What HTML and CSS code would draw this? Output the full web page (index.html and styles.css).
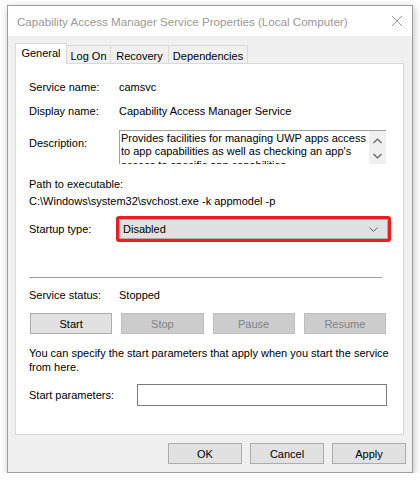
FILE: index.html
```html
<!DOCTYPE html>
<html>
<head>
<meta charset="utf-8">
<link rel="stylesheet" href="styles.css">
</head>
<body>
<div class="window">
  <div class="titlebar">
    <span class="title">Capability Access Manager Service Properties (Local Computer)</span>
    <svg class="close" width="12" height="12" viewBox="0 0 12 12"><path d="M1 1L11 11M11 1L1 11" stroke="#9a9a9a" stroke-width="1" fill="none"/></svg>
  </div>
  <div class="client">
    <div class="tabs">
      <div class="tab active t-general">General</div>
      <div class="tab t-logon">Log On</div>
      <div class="tab t-recovery">Recovery</div>
      <div class="tab t-deps">Dependencies</div>
    </div>
    <div class="panel">
      <div class="row r-name"><span class="label">Service name:</span><span class="value">camsvc</span></div>
      <div class="row r-display"><span class="label">Display name:</span><span class="value">Capability Access Manager Service</span></div>
      <div class="row r-desc">
        <span class="label">Description:</span>
        <div class="descbox">
          <div class="desctext">Provides facilities for managing UWP apps access<br>to app capabilities as well as checking an app's<br>access to specific app capabilities</div>
          <div class="scroll">
            <svg width="9" height="6" viewBox="0 0 9 6"><path d="M0.5 5L4.5 1L8.5 5" stroke="#606060" stroke-width="1.2" fill="none"/></svg>
            <svg width="9" height="6" viewBox="0 0 9 6"><path d="M0.5 1L4.5 5L8.5 1" stroke="#606060" stroke-width="1.2" fill="none"/></svg>
          </div>
        </div>
      </div>
      <div class="row r-pathlabel">Path to executable:</div>
      <div class="row r-path">C:\Windows\system32\svchost.exe -k appmodel -p</div>
      <div class="row r-startup">
        <span class="label">Startup type:</span>
        <div class="highlight">
          <div class="combo">
            <span>Disabled</span>
            <svg width="9" height="5" viewBox="0 0 9 5"><path d="M0.5 0.5L4.5 4.5L8.5 0.5" stroke="#606060" stroke-width="1" fill="none"/></svg>
          </div>
        </div>
      </div>
      <div class="separator"></div>
      <div class="row r-status"><span class="label">Service status:</span><span class="value">Stopped</span></div>
      <div class="svcbuttons">
        <div class="btn">Start</div>
        <div class="btn disabled">Stop</div>
        <div class="btn disabled">Pause</div>
        <div class="btn disabled">Resume</div>
      </div>
      <div class="note">You can specify the start parameters that apply when you start the service<br>from here.</div>
      <div class="row r-params">
        <span class="label plabel">Start parameters:</span>
        <div class="input"></div>
      </div>
    </div>
    <div class="footer">
      <div class="btn fbtn">OK</div>
      <div class="btn fbtn">Cancel</div>
      <div class="btn fbtn">Apply</div>
    </div>
  </div>
</div>
</body>
</html>
```

FILE: styles.css
```css
* { box-sizing: border-box; }
html, body { margin: 0; padding: 0; background: #ffffff; }
body {
  padding: 5px 0 0 7px;
  font-family: "Liberation Sans", Arial, sans-serif;
  font-size: 11px;
  color: #000;
}
.window {
  width: 406px;
  height: 468px;
  border: 1px solid #9c9c9c;
  box-shadow: 1px 2px 8px rgba(0,0,0,0.25);
  display: flex;
  flex-direction: column;
  background: #f0f0f0;
}
.titlebar {
  height: 30px;
  background: #ffffff;
  display: flex;
  align-items: center;
  padding-left: 9px;
  padding-right: 9px;
  justify-content: space-between;
}
.title {
  color: #999999;
  font-size: 11.6px;
}
.close { margin-right: 0px; }
.client {
  height: 436px;
  display: flex;
  flex-direction: column;
}
.tabs {
  display: flex;
  align-items: flex-end;
  margin-top: 7px;
  padding-left: 7px;
  height: 20px;
  position: relative;
  z-index: 1;
}
.tab {
  height: 18px;
  border: 1px solid #d9d9d9;
  border-bottom: none;
  border-left: none;
  background: #f0f0f0;
  text-align: center;
  line-height: 18px;
  padding-top: 1px;
}
.tab.active {
  height: 21px;
  border-left: 1px solid #d9d9d9;
  background: #ffffff;
  margin-bottom: -1px;
  line-height: 18px;
  padding-top: 0;
}
.t-general { width: 52px; }
.t-logon { width: 44px; }
.t-recovery { width: 58px; }
.t-deps { width: 79px; }
.panel {
  width: 389px;
  height: 372px;
  margin-left: 7px;
  border: 1px solid #d9d9d9;
  background: #ffffff;
  padding: 15px 0 0 13px;
  display: flex;
  flex-direction: column;
}
.row {
  display: flex;
  align-items: center;
  height: 16px;
  line-height: 16px;
}
.label { width: 90px; flex: none; }
.r-display { margin-top: 8px; }
.r-desc {
  margin-top: 11px;
  height: 34px;
  align-items: flex-start;
}
.r-desc .label { padding-top: 5px; }
.descbox {
  width: 267px;
  height: 34px;
  border-top: 1px solid #a0a0a0;
  border-left: 1px solid #a0a0a0;
  display: flex;
  overflow: hidden;
}
.desctext {
  flex: 1;
  padding: 1px 0 0 1px;
  line-height: 13.3px;
  white-space: nowrap;
  overflow: hidden;
}
.scroll {
  width: 17px;
  background: #f0f0f0;
  display: flex;
  flex-direction: column;
  align-items: center;
  justify-content: space-between;
  padding: 7px 0 5px;
}
.r-pathlabel { margin-top: 12px; }
.r-path { margin-top: 1px; }
.r-startup {
  margin-top: 7px;
  height: 26px;
}
.highlight {
  margin-left: -3px;
  width: 275px;
  height: 26px;
  border: 3px solid #ee1c24;
  border-radius: 3px;
  padding: 0;
}
.combo {
  height: 100%;
  background: #e1e1e1;
  border: 1px solid #adadad;
  display: flex;
  align-items: center;
  justify-content: space-between;
  padding: 0 9px 0 3px;
}
.separator {
  margin-top: 35px;
  width: 353px;
  height: 1px;
  background: #a0a0a0;
}
.r-status { margin-top: 9px; }
.svcbuttons {
  margin-top: 10px;
  margin-left: 1px;
  width: 356px;
  display: grid;
  grid-template-columns: repeat(4, 1fr);
  column-gap: 9px;
}
.btn {
  height: 21px;
  background: #e1e1e1;
  border: 1px solid #adadad;
  display: flex;
  align-items: center;
  justify-content: center;
}
.btn.disabled {
  background: #cccccc;
  border-color: #bfbfbf;
  color: #838383;
}
.note {
  margin-top: 12px;
  line-height: 14px;
}
.r-params {
  margin-top: 10px;
  height: 22px;
}
.plabel { width: 108px; }
.input {
  width: 250px;
  height: 22px;
  border: 1px solid #7a7a7a;
  background: #ffffff;
}
.footer {
  margin-top: 8px;
  display: flex;
  justify-content: flex-end;
  gap: 8px;
  padding-right: 6px;
}
.fbtn { width: 74px; }
```
